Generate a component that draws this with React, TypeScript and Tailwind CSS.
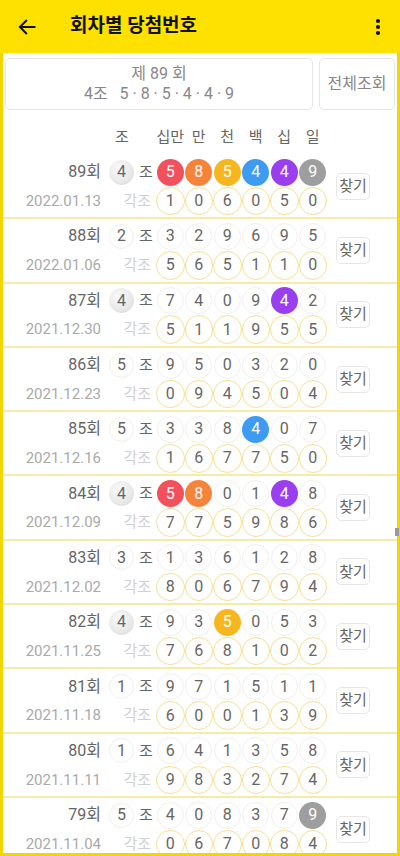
import React from 'react';

const WIN = [5, 8, 5, 4, 4, 9];
const WIN_GROUP = 4;
const BALL_COLORS = ['bg-[#f2505c]', 'bg-[#f5843a]', 'bg-[#f6b71e]', 'bg-[#3d9bf2]', 'bg-[#9a3ef0]', 'bg-[#9e9e9e]'];
const HEADS = ['십만', '만', '천', '백', '십', '일'];

type Round = { no: number; date: string; group: number; top: number[]; bottom: number[] };

const rounds: Round[] = [
  { no: 89, date: '2022.01.13', group: 4, top: [5, 8, 5, 4, 4, 9], bottom: [1, 0, 6, 0, 5, 0] },
  { no: 88, date: '2022.01.06', group: 2, top: [3, 2, 9, 6, 9, 5], bottom: [5, 6, 5, 1, 1, 0] },
  { no: 87, date: '2021.12.30', group: 4, top: [7, 4, 0, 9, 4, 2], bottom: [5, 1, 1, 9, 5, 5] },
  { no: 86, date: '2021.12.23', group: 5, top: [9, 5, 0, 3, 2, 0], bottom: [0, 9, 4, 5, 0, 4] },
  { no: 85, date: '2021.12.16', group: 5, top: [3, 3, 8, 4, 0, 7], bottom: [1, 6, 7, 7, 5, 0] },
  { no: 84, date: '2021.12.09', group: 4, top: [5, 8, 0, 1, 4, 8], bottom: [7, 7, 5, 9, 8, 6] },
  { no: 83, date: '2021.12.02', group: 3, top: [1, 3, 6, 1, 2, 8], bottom: [8, 0, 6, 7, 9, 4] },
  { no: 82, date: '2021.11.25', group: 4, top: [9, 3, 5, 0, 5, 3], bottom: [7, 6, 8, 1, 0, 2] },
  { no: 81, date: '2021.11.18', group: 1, top: [9, 7, 1, 5, 1, 1], bottom: [6, 0, 0, 1, 3, 9] },
  { no: 80, date: '2021.11.11', group: 1, top: [6, 4, 1, 3, 5, 8], bottom: [9, 8, 3, 2, 7, 4] },
  { no: 79, date: '2021.11.04', group: 5, top: [4, 0, 8, 3, 7, 9], bottom: [0, 6, 7, 0, 8, 4] },
];

const RoundRow: React.FC<{ r: Round }> = ({ r }) => (
  <div className="flex h-[64.3px] shrink-0 items-center border-b-2 border-[#f8eaa8]">
    <div className="flex w-[324px] flex-col pt-[1px]">
      {/* winning line */}
      <div className="flex h-[29px] items-center">
        <div className="w-[98px] text-right text-[16px] text-[#666]">{r.no}회</div>
        <div className="flex w-[55px] items-center">
          <div
            className={`ml-[8px] flex h-[25px] w-[25px] items-center justify-center rounded-full text-[16px] text-[#666] ${
              r.group === WIN_GROUP
                ? 'bg-[radial-gradient(circle_at_40%_35%,#fafafa_0%,#e8e8e8_60%,#d4d4d4_100%)]'
                : 'border border-[#efefef] bg-white'
            }`}
          >
            {r.group}
          </div>
          <span className="ml-[5px] text-[15px] text-[#666]">조</span>
        </div>
        {r.top.map((d, i) => {
          const hit = d === WIN[i];
          return (
            <div key={i} className="flex w-[28.5px] justify-center">
              <div
                className={`flex h-[27px] w-[27px] items-center justify-center rounded-full text-[16px] ${
                  hit ? `${BALL_COLORS[i]} text-white` : 'border border-[#efefef] bg-white text-[#666]'
                }`}
              >
                {d}
              </div>
            </div>
          );
        })}
      </div>
      {/* each-group line */}
      <div className="flex h-[29px] items-center">
        <div className="w-[98px] text-right text-[15px] text-[#aaa]">{r.date}</div>
        <div className="w-[55px] pr-[5px] text-right text-[15px] text-[#d0d0d0]">각조</div>
        {r.bottom.map((d, i) => (
          <div key={i} className="flex w-[28.5px] justify-center">
            <div className="flex h-[28.5px] w-[28.5px] items-center justify-center rounded-full border-[1.5px] border-[#f4e193] bg-white text-[16px] text-[#666]">
              {d}
            </div>
          </div>
        ))}
      </div>
    </div>
    <button className="ml-[9px] flex h-[27px] w-[34px] items-center justify-center rounded-[5px] border border-[#e6e6e6] bg-white text-[15px] text-[#666]">
      찾기
    </button>
  </div>
);

export default function App() {
  return (
    <div
      className="relative flex h-[856px] w-[400px] flex-col overflow-hidden bg-white"
      style={{ fontFamily: 'Roboto, "Noto Sans CJK KR", sans-serif' }}
    >
      <header className="flex h-[53px] shrink-0 items-center bg-[#ffe100] px-[17px]">
        <svg width="20" height="20" viewBox="0 0 24 24" fill="none" stroke="#111" strokeWidth="2.4" strokeLinecap="square">
          <path d="M21 12H4" />
          <path d="M11 4.5L3.5 12L11 19.5" />
        </svg>
        <h1 className="ml-[33px] flex-1 text-[19px] font-bold text-[#111]">회차별 당첨번호</h1>
        <svg width="6" height="20" viewBox="0 0 6 20" className="mr-[2px]">
          <circle cx="3" cy="4" r="2.1" fill="#111" />
          <circle cx="3" cy="10" r="2.1" fill="#111" />
          <circle cx="3" cy="16" r="2.1" fill="#111" />
        </svg>
      </header>

      <div className="flex flex-1 flex-col border-x-[3px] border-b-[3px] border-[#f3d600] overflow-hidden">
        <div className="flex shrink-0 gap-[6px] pl-[2px] pr-[2px] pt-[5px]">
          <div className="flex h-[52px] w-[308px] flex-col items-center justify-center rounded-[5px] border border-[#e6e6e6] text-[16px] leading-[20px] text-[#888]">
            <div>제 89 회</div>
            <div className="whitespace-pre">4조   5 · 8 · 5 · 4 · 4 · 9</div>
          </div>
          <button className="flex h-[52px] flex-1 items-center justify-center rounded-[5px] border border-[#e6e6e6] text-[16px] text-[#888]">
            전체조회
          </button>
        </div>

        <div className="flex h-[45px] shrink-0 items-center pt-[9px] text-[15px] text-[#666]">
          <div className="w-[98px]" />
          <div className="w-[55px] pl-[14px]">조</div>
          {HEADS.map((h) => (
            <div key={h} className="flex w-[28.5px] justify-center whitespace-nowrap">
              {h}
            </div>
          ))}
        </div>

        <div className="flex flex-col">
          {rounds.map((r) => (
            <RoundRow key={r.no} r={r} />
          ))}
        </div>
      </div>

      <div className="absolute right-[1px] top-[528px] h-[8px] w-[4px] bg-[#9a9a9a]" />
    </div>
  );
}
